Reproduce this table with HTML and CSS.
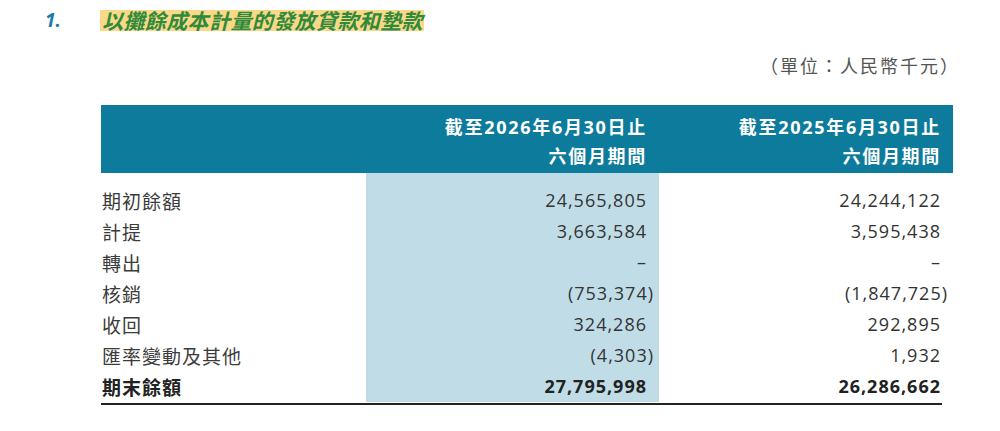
FILE: index.html
```html
<!DOCTYPE html>
<html lang="zh-Hant">
<head>
<meta charset="utf-8">
<title>以攤餘成本計量的發放貸款和墊款</title>
<link rel="stylesheet" href="styles.css">
</head>
<body>
<div class="page">
  <div class="title-row">
    <span class="num">1.</span>
    <span class="title">以攤餘成本計量的發放貸款和墊款</span>
  </div>
  <div class="unit">（單位：人民幣千元）</div>
  <div class="tbl">
    <div class="head">
      <div class="hc hc-label"></div>
      <div class="hc"><div>截至2026年6月30日止</div><div>六個月期間</div></div>
      <div class="hc"><div>截至2025年6月30日止</div><div>六個月期間</div></div>
    </div>
    <div class="body">
      <div class="col labels">
        <div class="cell">期初餘額</div>
        <div class="cell">計提</div>
        <div class="cell">轉出</div>
        <div class="cell">核銷</div>
        <div class="cell">收回</div>
        <div class="cell">匯率變動及其他</div>
        <div class="cell total">期末餘額</div>
      </div>
      <div class="col nums shaded">
        <div class="cell">24,565,805</div>
        <div class="cell">3,663,584</div>
        <div class="cell">–</div>
        <div class="cell">(753,374<span class="cp">)</span></div>
        <div class="cell">324,286</div>
        <div class="cell">(4,303<span class="cp">)</span></div>
        <div class="cell total">27,795,998</div>
      </div>
      <div class="col nums">
        <div class="cell">24,244,122</div>
        <div class="cell">3,595,438</div>
        <div class="cell">–</div>
        <div class="cell">(1,847,725<span class="cp">)</span></div>
        <div class="cell">292,895</div>
        <div class="cell">1,932</div>
        <div class="cell total">26,286,662</div>
      </div>
    </div>
    <div class="rule"></div>
  </div>
</div>
</body>
</html>
```

FILE: styles.css
```css
html, body {
  margin: 0;
  padding: 0;
  background: #ffffff;
}

.page {
  width: 1000px;
  padding-top: 10px;
  font-family: "Open Sans", "Noto Sans CJK TC", sans-serif;
}

.title-row {
  display: flex;
  align-items: center;
  height: 21px;
  padding-left: 45px;
}

.num {
  width: 55px;
  font-family: "Open Sans", sans-serif;
  font-weight: 700;
  font-style: italic;
  font-size: 19px;
  line-height: 21px;
  color: #1c7aa8;
}

.title {
  font-family: "Noto Sans CJK TC", sans-serif;
  font-weight: 700;
  font-style: italic;
  font-size: 21px;
  letter-spacing: 0.4px;
  line-height: 21px;
  padding: 0 1px 0 2px;
  color: #2f8a3c;
  background: #fbd886;
}

.unit {
  margin-top: 22px;
  padding-right: 40px;
  text-align: right;
  font-family: "Noto Sans CJK TC", sans-serif;
  font-size: 18px;
  letter-spacing: 2px;
  line-height: 24px;
  color: #555555;
}

.tbl {
  margin-top: 28px;
  margin-left: 101px;
  width: 852px;
}

.head {
  display: grid;
  grid-template-columns: 265px 293px 294px;
  background: #0d7b9b;
  height: 68px;
  box-sizing: border-box;
  padding: 8px 0 2px;
}

.hc {
  text-align: right;
  padding-right: 12px;
  color: #ffffff;
  font-family: "Open Sans", "Noto Sans CJK TC", sans-serif;
  font-weight: 700;
  font-size: 18px;
  letter-spacing: 1.7px;
  line-height: 29px;
}

.body {
  display: grid;
  grid-template-columns: 265px 293px 294px;
}

.col {
  padding-top: 12px;
}

.shaded {
  background: #c0dde7;
}

.cell {
  height: 31px;
  line-height: 31px;
  white-space: nowrap;
}

.labels .cell {
  padding-left: 1px;
  font-family: "Noto Sans CJK TC", sans-serif;
  font-size: 19px;
  letter-spacing: 1px;
  color: #3c3c3c;
}

.nums .cell {
  text-align: right;
  padding-right: 12px;
  font-family: "Open Sans", sans-serif;
  font-size: 18px;
  letter-spacing: 1px;
  color: #333333;
}

.cp {
  margin-right: -7px;
}

.labels .cell.total,
.nums .cell.total {
  font-weight: 700;
  color: #222222;
}

.rule {
  height: 2px;
  margin-top: 1px;
  margin-right: 11px;
  background: #222222;
}
```
